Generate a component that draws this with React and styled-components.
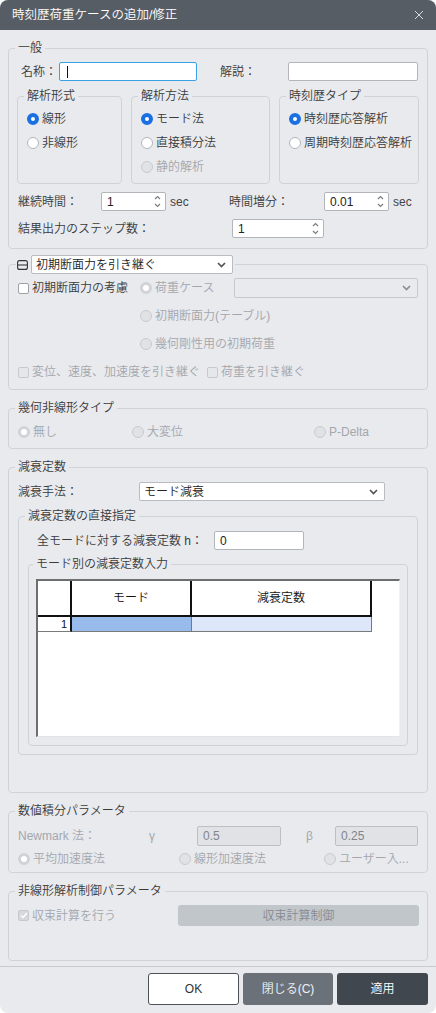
import styled, { createGlobalStyle, css } from "styled-components";

const GlobalStyle = createGlobalStyle`
  * { box-sizing: border-box; }
  body {
    margin: 0;
    background: #ffffff;
    font-family: "Liberation Sans", "Noto Sans CJK JP", sans-serif;
    font-size: 12px;
    font-weight: 350;
    line-height: 14px;
    color: #3a3a3a;
  }
`;

const MUTED = "#a3a7ad";

const Dialog = styled.div`
  width: 436px;
  height: 1013px;
  display: flex;
  flex-direction: column;
  background: #e9eaee;
  border-radius: 8px;
  overflow: hidden;
`;

const TitleBar = styled.div`
  flex: none;
  height: 30px;
  display: flex;
  align-items: center;
  justify-content: space-between;
  padding: 0 12px 0 12px;
  background: #575d65;
  color: #fff;
  font-size: 12.5px;
`;

const Body = styled.div`
  flex: 1;
  min-height: 0;
  display: flex;
  flex-direction: column;
  gap: 11px;
  padding: 11px 8px 0;
`;

const Group = styled.fieldset`
  margin: ${(p) => p.$mt ?? 0}px 0 0;
  min-width: 0;
  border: 1px solid #cfd2d7;
  border-radius: 4px;
  padding: ${(p) => p.$pt ?? 8}px ${(p) => p.$px ?? 9}px ${(p) => p.$pb ?? 8}px;
  display: flex;
  flex-direction: column;
  gap: ${(p) => p.$gap ?? 8}px;
  ${(p) => p.$w && css`width: ${p.$w}px; flex: none;`}
`;

const Legend = styled.legend`
  padding: 0 3px;
  margin-left: -3px;
  line-height: 14px;
  color: #3a3a3a;
  white-space: nowrap;
`;

const ToolLegend = styled.legend`
  display: flex;
  align-items: center;
  gap: 3px;
  padding: 0 2px 0 1px;
  margin-left: -2px;
`;

const SubGroups = styled.div`
  display: flex;
  gap: 9px;
  margin: 0 -1px;
`;

const Row = styled.div`
  display: flex;
  align-items: center;
  height: ${(p) => p.$h ?? 19}px;
  padding-left: ${(p) => p.$indent ?? 0}px;
`;

const Label = styled.span`
  flex: none;
  width: ${(p) => p.$w}px;
  margin-left: ${(p) => p.$ml ?? 0}px;
  color: ${(p) => (p.$muted ? MUTED : "#3a3a3a")};
  white-space: nowrap;
`;

const Unit = styled.span`
  flex: none;
  width: ${(p) => p.$w ?? 20}px;
  margin-left: 4px;
  color: #444;
`;

const Field = styled.div`
  flex: none;
  width: ${(p) => p.$w}px;
  height: ${(p) => p.$h ?? 19}px;
  display: flex;
  align-items: center;
  padding: 0 5px;
  background: ${(p) => (p.$disabled ? "#e1e2e5" : "#fff")};
  border: 1px solid
    ${(p) => (p.$focus ? "#38a2e4" : p.$disabled ? "#bcc0c5" : "#b2b6bb")};
  border-radius: 2px;
  color: ${(p) => (p.$disabled ? "#80858c" : "#222")};
`;

const Caret = styled.span`
  width: 1px;
  height: 12px;
  margin-left: 2px;
  background: #111;
`;

const Arrows = styled.svg`
  margin-left: auto;
  margin-right: -1px;
  flex: none;
`;

const Select = styled.div`
  flex: none;
  width: ${(p) => p.$w}px;
  height: ${(p) => p.$h ?? 19}px;
  display: flex;
  align-items: center;
  justify-content: space-between;
  padding: 0 6px 0 4px;
  background: ${(p) => (p.$disabled ? "transparent" : "#fff")};
  border: 1px solid ${(p) => (p.$disabled ? "#c6c9cd" : "#b8bcc1")};
  border-radius: 2px;
  color: #222;
  white-space: nowrap;
`;

const Option = styled.label`
  flex: none;
  display: flex;
  align-items: center;
  gap: 3px;
  height: 18px;
  width: ${(p) => (p.$w ? `${p.$w}px` : "auto")};
  color: ${(p) => (p.$disabled ? MUTED : "#3a3a3a")};
  white-space: nowrap;
`;

const Dot = styled.span`
  flex: none;
  width: 12px;
  height: 12px;
  border-radius: 50%;
  background: #fff;
  border: 1px solid #b2b6bb;
  ${(p) => p.$checked && css`border: 4px solid #1a6fe3;`}
  ${(p) => p.$disabled && css`background: #e0e2e5; border: 1px solid #c8cbcf;`}
  ${(p) => p.$disabled && p.$checked && css`background: #fff; border: 3px solid #d0d3d7;`}
`;

const Box = styled.span`
  flex: none;
  width: 11px;
  height: 11px;
  border-radius: 2px;
  display: flex;
  align-items: center;
  justify-content: center;
  border: 1px solid ${(p) => (p.$disabled ? "#c6c9cd" : "#9da1a7")};
  background: ${(p) =>
    p.$disabled ? (p.$checked ? "#d5d8dc" : "#e6e7ea") : "#fff"};
`;

const FlatButton = styled.div`
  flex: none;
  width: ${(p) => p.$w}px;
  height: 21px;
  display: flex;
  align-items: center;
  justify-content: center;
  border-radius: 3px;
  background: #c1c6cb;
  color: #868b92;
`;

const Grid = styled.div`
  height: 158px;
  background: #fff;
  border-top: 2px solid #6e6e6e;
  border-left: 2px solid #6e6e6e;
  border-right: 1px solid #f2f2f2;
  border-bottom: 1px solid #e4e4e4;
`;

const GridTable = styled.div`
  display: grid;
  grid-template-columns: 34px 120px 180px;
  grid-template-rows: 36px 15px;
  width: 334px;
`;

const HeadCell = styled.div`
  display: flex;
  align-items: center;
  justify-content: center;
  background: #fff;
  border-right: 2px solid #111;
  border-bottom: 2px solid #111;
  color: #111;
`;

const Cell = styled.div`
  display: flex;
  align-items: center;
  justify-content: flex-end;
  padding-right: 3px;
  font-size: 11px;
  line-height: 12px;
  color: #111;
  background: ${(p) => p.$bg ?? "#fff"};
  border-right: ${(p) => (p.$head ? "2px solid #111" : "1px solid #7a7a7a")};
  border-bottom: 1px solid #7a7a7a;
`;

const Footer = styled.div`
  flex: none;
  display: flex;
  justify-content: flex-end;
  gap: 4px;
  padding: 6px 8px 8px;
  border-top: 1px solid #c8cad0;
`;

const Button = styled.button`
  width: ${(p) => p.$w}px;
  height: 32px;
  border-radius: 3px;
  font: inherit;
  border: 1px solid transparent;
  ${(p) =>
    p.$kind === "light" &&
    css`background: #fff; border-color: #4c5158; color: #333;`}
  ${(p) =>
    p.$kind === "mid" && css`background: #6b7178; color: #f2f3f5;`}
  ${(p) =>
    p.$kind === "dark" && css`background: #41474e; color: #fff;`}
`;

function Chevron({ muted }) {
  return (
    <svg width="9" height="6" viewBox="0 0 9 6">
      <polyline
        points="1,1 4.5,4.5 8,1"
        fill="none"
        stroke={muted ? "#8a8e94" : "#555"}
        strokeWidth="1.7"
      />
    </svg>
  );
}

function Spin({ w, value }) {
  return (
    <Field $w={w}>
      {value}
      <Arrows width="7" height="13" viewBox="0 0 7 13">
        <polyline points="1,4 3.5,1.5 6,4" fill="none" stroke="#7a7e84" strokeWidth="1.2" />
        <polyline points="1,9 3.5,11.5 6,9" fill="none" stroke="#7a7e84" strokeWidth="1.2" />
      </Arrows>
    </Field>
  );
}

function Radio({ children, checked, disabled, w }) {
  return (
    <Option $w={w} $disabled={disabled}>
      <Dot $checked={checked} $disabled={disabled} />
      {children}
    </Option>
  );
}

function Check({ children, checked, disabled, w }) {
  return (
    <Option $w={w} $disabled={disabled}>
      <Box $checked={checked} $disabled={disabled}>
        {checked && (
          <svg width="8" height="7" viewBox="0 0 8 7">
            <polyline points="1,3.5 3,5.5 7,1" fill="none" stroke="#fff" strokeWidth="1.4" />
          </svg>
        )}
      </Box>
      {children}
    </Option>
  );
}

export default function App() {
  return (
    <>
      <GlobalStyle />
      <Dialog>
        <TitleBar>
          <span>時刻歴荷重ケースの追加/修正</span>
          <svg width="10" height="10" viewBox="0 0 10 10">
            <path d="M1 1 L9 9 M9 1 L1 9" stroke="#d8dbdf" strokeWidth="1" />
          </svg>
        </TitleBar>

        <Body>
          <Group $pt={7} $pb={10}>
            <Legend>一般</Legend>
            <Row>
              <Label $w={38} $ml={3}>名称：</Label>
              <Field $w={138} $focus>
                <Caret />
              </Field>
              <Label $w={68} $ml={23}>解説：</Label>
              <Field $w={130} />
            </Row>
            <SubGroups>
              <Group $w={105} $pt={7} $pb={7} $gap={6}>
                <Legend>解析形式</Legend>
                <Radio checked>線形</Radio>
                <Radio>非線形</Radio>
              </Group>
              <Group $w={139} $pt={7} $pb={7} $gap={6}>
                <Legend>解析方法</Legend>
                <Radio checked>モード法</Radio>
                <Radio>直接積分法</Radio>
                <Radio disabled>静的解析</Radio>
              </Group>
              <Group $w={140} $pt={7} $pb={7} $gap={6}>
                <Legend>時刻歴タイプ</Legend>
                <Radio checked>時刻歴応答解析</Radio>
                <Radio>周期時刻歴応答解析</Radio>
              </Group>
            </SubGroups>
            <Row>
              <Label $w={83}>継続時間：</Label>
              <Spin w={65} value="1" />
              <Unit $w={59}>sec</Unit>
              <Label $w={95}>時間増分：</Label>
              <Spin w={65} value="0.01" />
              <Unit>sec</Unit>
            </Row>
            <Row>
              <Label $w={214}>結果出力のステップ数：</Label>
              <Spin w={92} value="1" />
            </Row>
          </Group>

          <Group $mt={-5} $pt={4} $pb={7}>
            <ToolLegend>
              <svg width="11" height="10" viewBox="0 0 11 10">
                <rect x="0.6" y="0.6" width="9.8" height="8.8" rx="2" fill="none" stroke="#333" strokeWidth="1.1" />
                <line x1="0.6" y1="5" x2="10.4" y2="5" stroke="#333" strokeWidth="1.1" />
              </svg>
              <Select $w={202}>
                初期断面力を引き継ぐ
                <Chevron />
              </Select>
            </ToolLegend>
            <Row $h={20}>
              <Check w={122}>初期断面力の考慮</Check>
              <Radio w={94} checked disabled>荷重ケース</Radio>
              <Select $w={184} $h={20} $disabled>
                <span />
                <Chevron muted />
              </Select>
            </Row>
            <Row $h={20} $indent={122}>
              <Radio disabled>初期断面力(テーブル)</Radio>
            </Row>
            <Row $h={20} $indent={122}>
              <Radio disabled>幾何剛性用の初期荷重</Radio>
            </Row>
            <Row $h={20}>
              <Check w={189} disabled>変位、速度、加速度を引き継ぐ</Check>
              <Check disabled>荷重を引き継ぐ</Check>
            </Row>
          </Group>

          <Group $pb={7}>
            <Legend>幾何非線形タイプ</Legend>
            <Row $h={18}>
              <Radio w={114} checked disabled>無し</Radio>
              <Radio w={182} disabled>大変位</Radio>
              <Radio disabled>P-Delta</Radio>
            </Row>
          </Group>

          <Group $pb={37}>
            <Legend>減衰定数</Legend>
            <Row>
              <Label $w={121}>減衰手法：</Label>
              <Select $w={246}>
                モード減衰
                <Chevron />
              </Select>
            </Row>
            <Group $gap={7}>
              <Legend>減衰定数の直接指定</Legend>
              <Row $indent={9}>
                <Label $w={177}>全モードに対する減衰定数 h：</Label>
                <Field $w={90}>0</Field>
              </Row>
              <Group $px={7}>
                <Legend>モード別の減衰定数入力</Legend>
                <Grid>
                  <GridTable>
                    <HeadCell />
                    <HeadCell>モード</HeadCell>
                    <HeadCell>減衰定数</HeadCell>
                    <Cell $head>1</Cell>
                    <Cell $bg="#99bbec" />
                    <Cell $bg="#dce7f9" />
                  </GridTable>
                </Grid>
              </Group>
            </Group>
          </Group>

          <Group $gap={4} $pb={4}>
            <Legend>数値積分パラメータ</Legend>
            <Row $h={20}>
              <Label $w={131} $muted>Newmark 法：</Label>
              <Label $w={48} $muted>γ</Label>
              <Field $w={84} $h={20} $disabled>0.5</Field>
              <Label $w={29} $ml={25} $muted>β</Label>
              <Field $w={83} $h={20} $disabled>0.25</Field>
            </Row>
            <Row $h={18}>
              <Radio w={161} checked disabled>平均加速度法</Radio>
              <Radio w={145} disabled>線形加速度法</Radio>
              <Radio disabled>ユーザー入...</Radio>
            </Row>
          </Group>

          <Group $pt={7} $pb={34}>
            <Legend>非線形解析制御パラメータ</Legend>
            <Row $h={21}>
              <Check w={160} checked disabled>収束計算を行う</Check>
              <FlatButton $w={241}>収束計算制御</FlatButton>
            </Row>
          </Group>
        </Body>

        <Footer>
          <Button $w={91} $kind="light">OK</Button>
          <Button $w={90} $kind="mid">閉じる(C)</Button>
          <Button $w={91} $kind="dark">適用</Button>
        </Footer>
      </Dialog>
    </>
  );
}
